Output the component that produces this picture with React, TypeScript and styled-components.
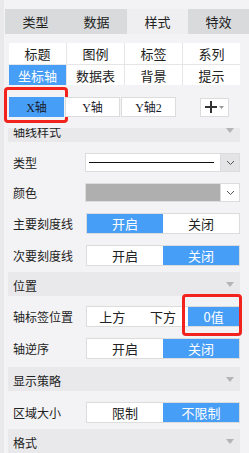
import React from 'react';
import styled, { createGlobalStyle } from 'styled-components';

const GlobalStyle = createGlobalStyle`
  html, body { margin: 0; padding: 0; background: #f3f3f5; }
  body { font-family: "Noto Sans CJK SC", "Liberation Sans", sans-serif; color: #222; }
  * { box-sizing: border-box; }
`;

const BLUE = '#479ef6';
const BORDER = '#dcdcdc';

const Shell = styled.div`
  width: 249px;
  height: 453px;
  display: flex;
  background: #f3f3f5;
  overflow: hidden;
`;

const Rail = styled.div`
  flex: none;
  width: 4px;
  background: #e9e9eb;
`;

const Panel = styled.div`
  flex: 1;
  display: flex;
  flex-direction: column;
  padding-top: 9px;
`;

const TabBar = styled.div`
  display: grid;
  grid-template-columns: repeat(4, 1fr);
  height: 25px;
  margin-left: 1px;
`;

const Tab = styled.div<{ $active?: boolean }>`
  display: flex;
  align-items: center;
  justify-content: center;
  font-size: 13px;
  color: #222;
  background: ${p => (p.$active ? '#efeff1' : '#d9dadc')};
`;

const Body = styled.div`
  display: flex;
  flex-direction: column;
  padding: 9px 9px 0 4px;
`;

const SubGrid = styled.div`
  display: grid;
  grid-template-columns: repeat(4, 1fr);
  grid-template-rows: 21px 20px;
  gap: 1px;
  margin-left: 1px;
  background: #e6e6e8;
`;

const SubTab = styled.div<{ $active?: boolean }>`
  display: flex;
  align-items: center;
  justify-content: center;
  font-size: 13px;
  background: ${p => (p.$active ? BLUE : '#fff')};
  color: ${p => (p.$active ? '#fff' : '#222')};
`;

const ButtonBar = styled.div`
  position: relative;
  z-index: 1;
  display: flex;
  align-items: center;
  padding: 12px 11px 11px 1px;
  background: #f3f3f5;
`;

const AxisGroup = styled.div`
  display: flex;
  gap: 1px;
`;

const AxisButton = styled.div<{ $active?: boolean }>`
  position: relative;
  width: 55px;
  height: 20px;
  display: flex;
  align-items: center;
  justify-content: center;
  border: 1px solid ${p => (p.$active ? BLUE : BORDER)};
  background: ${p => (p.$active ? BLUE : '#fff')};
  font-family: "Liberation Serif", "Noto Sans CJK SC", serif;
  font-size: 12px;
  color: #1a1a2a;
`;

const Highlight = styled.span<{ $t: number; $r: number; $b: number; $l: number }>`
  position: absolute;
  top: ${p => p.$t}px;
  right: ${p => p.$r}px;
  bottom: ${p => p.$b}px;
  left: ${p => p.$l}px;
  border: 3px solid #f2221c;
  border-radius: 4px;
  pointer-events: none;
`;

const AddButton = styled.div`
  margin-left: auto;
  width: 29px;
  height: 19px;
  display: flex;
  align-items: center;
  justify-content: center;
  gap: 2px;
  border: 1px solid ${BORDER};
  background: #fff;
`;

const SectionHeader = styled.div<{ $tucked?: boolean }>`
  height: 24px;
  margin-top: ${p => (p.$tucked ? '-10px' : '0')};
  display: flex;
  align-items: center;
  justify-content: space-between;
  padding: 0 6px 0 5px;
  background: #e9e9eb;
  font-size: 12px;
  color: #222;
`;

const HeaderTitle = styled.span`
  padding-top: 3px;
`;

const SectionBody = styled.div<{ $pad: string }>`
  display: flex;
  flex-direction: column;
  gap: 11px;
  padding: ${p => p.$pad};
`;

const Row = styled.div`
  display: flex;
  align-items: center;
  padding-left: 5px;
`;

const Label = styled.div`
  flex: 0 0 72px;
  font-size: 12px;
  color: #222;
  white-space: nowrap;
`;

const Select = styled.div`
  flex: 1;
  height: 19px;
  display: flex;
  border: 1px solid ${BORDER};
  background: #fff;
`;

const LinePreview = styled.div`
  flex: 1;
  display: flex;
  align-items: center;
  padding: 0 6px 0 3px;
  &::after {
    content: '';
    flex: 1;
    height: 1.5px;
    background: #111;
  }
`;

const Swatch = styled.div<{ $color: string }>`
  flex: 1;
  background: ${p => p.$color};
`;

const ChevronBox = styled.div<{ $shade?: boolean }>`
  flex: 0 0 19px;
  display: flex;
  align-items: center;
  justify-content: center;
  border-left: 1px solid ${BORDER};
  background: ${p => (p.$shade ? '#e4e4e6' : '#fff')};
`;

const Toggle = styled.div`
  flex: 1;
  height: 21px;
  display: flex;
  margin-left: 1px;
  border: 1px solid ${BORDER};
  background: #fff;
`;

const Segment = styled.div<{ $active?: boolean }>`
  position: relative;
  flex: 1;
  display: flex;
  align-items: center;
  justify-content: center;
  font-size: 13px;
  background: ${p => (p.$active ? BLUE : '#fff')};
  color: ${p => (p.$active ? '#fff' : '#222')};
`;

const Caret = () => (
  <svg width="8" height="5" viewBox="0 0 8 5">
    <path d="M0 0H8L4 5Z" fill="#b4b4b6" />
  </svg>
);

const Chevron = () => (
  <svg width="9" height="6" viewBox="0 0 9 6">
    <path d="M1 1L4.5 4.5L8 1" fill="none" stroke="#555" strokeWidth="1" />
  </svg>
);

const Header = ({ title, tucked }: { title: string; tucked?: boolean }) => (
  <SectionHeader $tucked={tucked}>
    <HeaderTitle>{title}</HeaderTitle>
    <Caret />
  </SectionHeader>
);

const OnOff = ({ on }: { on: boolean }) => (
  <Toggle>
    <Segment $active={on}>开启</Segment>
    <Segment $active={!on}>关闭</Segment>
  </Toggle>
);

export default function App() {
  const tabs = ['类型', '数据', '样式', '特效'];
  const subs = ['标题', '图例', '标签', '系列', '坐标轴', '数据表', '背景', '提示'];
  return (
    <>
      <GlobalStyle />
      <Shell>
        <Rail />
        <Panel>
          <TabBar>
            {tabs.map(t => (
              <Tab key={t} $active={t === '样式'}>{t}</Tab>
            ))}
          </TabBar>
          <Body>
            <SubGrid>
              {subs.map(s => (
                <SubTab key={s} $active={s === '坐标轴'}>{s}</SubTab>
              ))}
            </SubGrid>

            <ButtonBar>
              <AxisGroup>
                <AxisButton $active>
                  X轴
                  <Highlight $t={-11} $r={-5} $b={-7} $l={-6} />
                </AxisButton>
                <AxisButton>Y轴</AxisButton>
                <AxisButton>Y轴2</AxisButton>
              </AxisGroup>
              <AddButton>
                <svg width="12" height="12" viewBox="0 0 12 12">
                  <path d="M6 0V12M0 6H12" stroke="#333" strokeWidth="2" />
                </svg>
                <svg width="5" height="3" viewBox="0 0 5 3">
                  <path d="M0 0H5L2.5 3Z" fill="#999" />
                </svg>
              </AddButton>
            </ButtonBar>

            <Header title="轴线样式" tucked />
            <SectionBody $pad="11px 0 6px">
              <Row>
                <Label>类型</Label>
                <Select>
                  <LinePreview />
                  <ChevronBox $shade>
                    <Chevron />
                  </ChevronBox>
                </Select>
              </Row>
              <Row>
                <Label>颜色</Label>
                <Select>
                  <Swatch $color="#afafaf" />
                  <ChevronBox>
                    <Chevron />
                  </ChevronBox>
                </Select>
              </Row>
              <Row>
                <Label>主要刻度线</Label>
                <OnOff on />
              </Row>
              <Row>
                <Label>次要刻度线</Label>
                <OnOff on={false} />
              </Row>
            </SectionBody>

            <Header title="位置" />
            <SectionBody $pad="10px 0 8px">
              <Row>
                <Label>轴标签位置</Label>
                <Toggle>
                  <Segment>上方</Segment>
                  <Segment>下方</Segment>
                  <Segment $active>
                    0值
                    <Highlight $t={-13} $r={-3} $b={-10} $l={-6} />
                  </Segment>
                </Toggle>
              </Row>
              <Row>
                <Label>轴逆序</Label>
                <OnOff on={false} />
              </Row>
            </SectionBody>

            <Header title="显示策略" />
            <SectionBody $pad="11px 0 6px">
              <Row>
                <Label>区域大小</Label>
                <Toggle>
                  <Segment>限制</Segment>
                  <Segment $active>不限制</Segment>
                </Toggle>
              </Row>
            </SectionBody>

            <Header title="格式" />
          </Body>
        </Panel>
      </Shell>
    </>
  );
}
